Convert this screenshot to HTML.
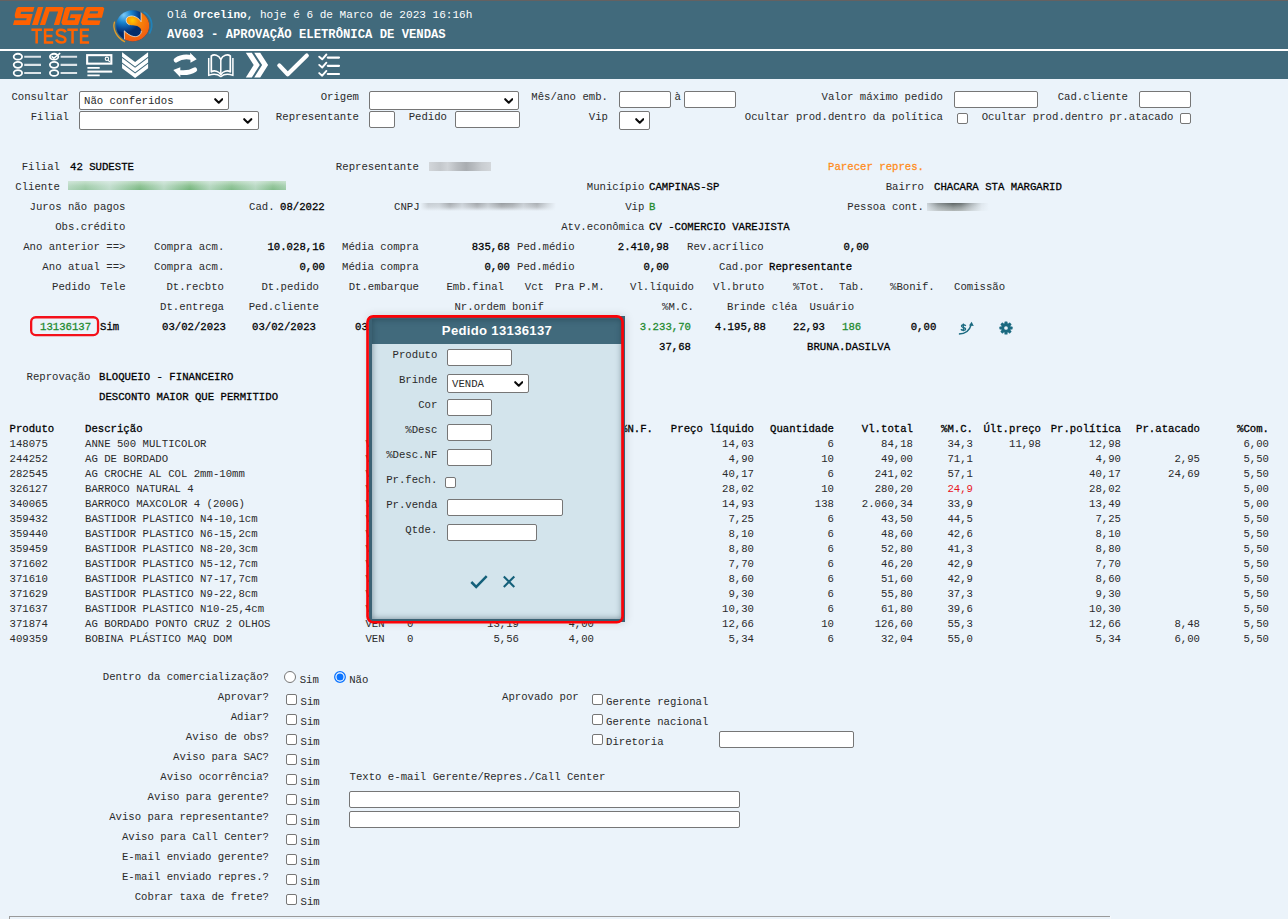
<!DOCTYPE html>
<html lang="pt-br"><head><meta charset="utf-8"><title>AV603 - APROVAÇÃO ELETRÔNICA DE VENDAS</title>
<style>
html,body{margin:0;padding:0}
body{width:1288px;height:919px;overflow:hidden;position:relative;background:#ebf3fa;font-family:"Liberation Mono",monospace;font-size:10.667px;color:#2a2a2a}
.t{position:absolute;white-space:pre;line-height:12px;height:12px}
.b{color:#000;-webkit-text-stroke:.27px currentColor}
.o{color:#ff8c1a}.gn{color:#1e8a2e}.rd{color:#e8141c}
.h{font-size:11.07px;color:#fff;line-height:13px;height:13px}
.h2{font-size:12.22px;font-weight:bold;color:#fff;line-height:14px;height:14px}
#topline{position:absolute;left:0;top:0;width:1288px;height:1px;background:#656161}
#hdr{position:absolute;left:0;top:1px;width:1288px;height:48px;background:#416a7c}
#sep{position:absolute;left:0;top:49px;width:1288px;height:2px;background:#fff}
#tb{position:absolute;left:0;top:51px;width:1288px;height:28px;background:#416a7c}
.inp{position:absolute;background:#fff;border:1px solid #767676;border-radius:2px}
.sel .st{position:absolute;left:4px;top:3px;line-height:12px;white-space:pre}
.sel .chev{position:absolute;right:5px;top:5.5px;width:9.5px;height:6.3px}
.cb{position:absolute;background:#fff;border:1px solid #767676;border-radius:2px}
.rad{position:absolute;width:10px;height:10px;border:1px solid #767676;border-radius:50%;background:#fff}
.rad.on{border-color:#0b6ff0;border-width:1.5px;width:9px;height:9px}
.rad.on i{position:absolute;left:1.75px;top:1.75px;width:5.5px;height:5.5px;border-radius:50%;background:#0b6ff0}
.bl{position:absolute}
.b1{background:linear-gradient(90deg,#d2d6da,#c4c8cc 18%,#d0d4d8 30%,#b9bdc1 45%,#a9adb1 60%,#b7bbbf 72%,#c9cdd1 85%,#d3d7db)}
.b2{background:linear-gradient(90deg,rgba(235,243,250,.5) 0%,rgba(235,243,250,.3) 8%,rgba(235,243,250,.62) 19%,rgba(235,243,250,.05) 33%,rgba(235,243,250,.55) 44%,rgba(235,243,250,0) 56%,rgba(235,243,250,.5) 65%,rgba(235,243,250,.1) 75%,rgba(235,243,250,.52) 86%,rgba(235,243,250,.12) 94%,rgba(235,243,250,.35) 100%),linear-gradient(180deg,#b9dabd,#88c08e 55%,#74b47b)}
.b3{background:linear-gradient(90deg,rgba(235,243,250,1) 0%,rgba(235,243,250,.55) 6%,rgba(235,243,250,.6) 14%,rgba(235,243,250,.15) 22%,rgba(235,243,250,.6) 31%,rgba(235,243,250,.1) 42%,rgba(235,243,250,.5) 50%,rgba(235,243,250,0) 60%,rgba(235,243,250,.15) 68%,rgba(235,243,250,.55) 76%,rgba(235,243,250,.2) 86%,rgba(235,243,250,.7) 94%,rgba(235,243,250,1) 100%),linear-gradient(180deg,#979b9f,#b2b6ba 50%,rgba(235,243,250,1) 100%)}
.b4{background:linear-gradient(90deg,rgba(235,243,250,.78) 0%,rgba(235,243,250,.3) 18%,rgba(235,243,250,0) 42%,rgba(235,243,250,.1) 55%,rgba(235,243,250,.55) 72%,rgba(235,243,250,.9) 88%,rgba(235,243,250,1) 100%),linear-gradient(180deg,#5c6363,#8d9494 50%,#b3b9b9)}
.redbox{position:absolute;border:2.3px solid #f4101a;border-radius:5.5px}
#dlg{position:absolute;left:369px;top:316px;width:250px;height:300px;border:3px solid #3b6274;background:#d3e4ec;box-shadow:0 0 9px rgba(0,0,0,.16)}
#dh{height:25px;background:#416a7c;color:#fff;font-family:"Liberation Sans",sans-serif;font-weight:bold;font-size:13.1px;letter-spacing:.32px;text-align:center;line-height:24px}
#dsh{position:absolute;left:0;top:0;right:0;bottom:0;box-shadow:inset 0 0 6px rgba(20,45,60,.5)}
#redd{position:absolute;left:366.2px;top:315px;width:252.2px;height:303px;border:2.7px solid #fb0207;border-radius:7px}
</style></head>
<body>
<div id="topline"></div><div id="hdr"></div><div id="sep"></div><div id="tb"></div>
<svg id="logo" width="165" height="50" viewBox="0 0 165 50" style="position:absolute;left:0;top:0"><path fill="#ff6100" fill-rule="evenodd" d="M18.07 6.91 L34.42 6.91 L33.09 11.67 L21.10 11.67 L20.58 13.89 L32.69 13.89 L29.78 24.99 L13.03 24.99 L14.24 20.35 L26.15 20.35 L26.75 18.13 L15.45 18.13 L14.76 16.11 L14.93 14.09 L16.46 8.44ZM37.86 6.91 L43.31 6.91 L37.86 24.99 L32.00 24.99ZM39.87 24.99 L45.93 6.91 L62.48 6.91 L63.77 7.96 L59.25 24.99 L53.80 24.99 L58.12 11.47 L49.48 11.47 L45.12 24.99ZM66.73 6.91 L84.01 6.91 L82.84 10.60 L70.03 10.60 L67.32 20.30 L74.69 20.30 L75.27 17.98 L69.84 17.98 L70.81 14.29 L81.68 14.29 L78.19 24.96 L62.66 24.96 L61.30 22.83 L65.18 8.27ZM86.92 6.91 L103.03 6.91 L104.27 8.46 L101.94 17.66 L88.09 17.98 L87.43 20.30 L100.51 20.50 L99.23 24.96 L82.26 24.96 L80.98 22.83 L85.64 8.46ZM90.22 11.18 L98.18 11.18 L97.60 13.51 L89.25 13.51Z"/><g fill="none" stroke="#ff6200" stroke-width="2.5"><path d="M31.4 29.8H41.9M36.65 28.7V43.6"/><path d="M53.2 29.8H45.1V42.4H53.2M45.1 36H52.4"/><path d="M65.6 32.2C64.8 30.2 63.2 29.7 61.1 29.7C58.3 29.7 56.9 31.2 56.9 33C56.9 37.3 65.4 35 65.4 39.4C65.4 41.5 63.6 42.5 61.2 42.5C58.6 42.5 57 41.6 56.1 39.6"/><path d="M67.3 29.8H77.8M72.55 28.7V43.6"/><path d="M89.1 29.8H81.1V42.4H89.1M81.1 36H88.3"/></g><defs><radialGradient id="gb" gradientUnits="userSpaceOnUse" cx="330" cy="230" r="520"><stop offset="0" stop-color="#7cc8f5"/><stop offset="0.3" stop-color="#1a86d0"/><stop offset="0.55" stop-color="#0a4c98"/><stop offset="0.72" stop-color="#052c6b"/></radialGradient><radialGradient id="go" gradientUnits="userSpaceOnUse" cx="510" cy="345" r="420"><stop offset="0" stop-color="#ffc800"/><stop offset="0.32" stop-color="#f98a06"/><stop offset="0.7" stop-color="#f4700c"/><stop offset="1" stop-color="#f25a12"/></radialGradient><clipPath id="gc"><ellipse cx="515" cy="455" rx="345" ry="326"/></clipPath></defs><g transform="translate(108 4) scale(0.04789)"><g clip-path="url(#gc)"><rect x="100" y="100" width="800" height="720" fill="url(#gb)"/><path id="sp" d="M690 100 L690 370 C640 290 560 245 480 250 C410 255 372 300 380 350 C388 412 440 440 520 446 C600 452 690 482 695 560 C698 640 620 692 540 680 C460 665 390 612 340 560 L345 820 L900 820 L900 100Z" fill="url(#go)"/><path d="M690 150 L690 370 C640 290 560 245 480 250 C410 255 372 300 380 350 C384 390 410 420 450 434 M695 560 C698 640 620 692 540 680 C460 665 390 612 340 560 L345 760" fill="none" stroke="#fff" stroke-width="15" stroke-linejoin="miter" opacity=".95"/></g><path d="M135 380 C90 520 180 700 345 785" fill="none" stroke="#f5a21e" stroke-width="28" stroke-linecap="round" opacity=".9"/><path d="M755 172 C900 250 960 440 870 605" fill="none" stroke="#1b86c4" stroke-width="36" stroke-linecap="round" opacity=".85"/></g></svg>
<span class="t h" style="left:167px;top:9px">Olá <b>Orcelino</b>, hoje é 6 de Marco de 2023 16:16h</span>
<span class="t h2" style="left:167px;top:28px">AV603 - APROVAÇÃO ELETRÔNICA DE VENDAS</span>
<svg id="tbi" width="360" height="28" viewBox="0 0 360 28" style="position:absolute;left:0;top:51px" fill="none" stroke="#fff">
<g stroke-width="1.8"><ellipse cx="17.9" cy="5.7" rx="4.2" ry="2.95"/><ellipse cx="17.9" cy="13.85" rx="4.2" ry="2.95"/><ellipse cx="17.9" cy="22.0" rx="4.2" ry="2.95"/></g>
<g stroke-width="2.1" stroke="#dde4e8"><path d="M24.2 5.8H41M24.2 13.9H41M24.2 22.05H41"/></g>
<g stroke-width="1.8"><ellipse cx="54.1" cy="5.7" rx="4.2" ry="2.95"/><ellipse cx="54.1" cy="13.85" rx="4.2" ry="2.95"/><ellipse cx="54.1" cy="22.0" rx="4.2" ry="2.95"/><path d="M51.6 5.3 L53.8 7.3 L60.2 2.2" stroke-width="1.6"/></g>
<g stroke-width="2.1" stroke="#dde4e8"><path d="M60.6 5.8H77.1M60.6 13.9H77.1M60.6 22.05H77.1"/></g>
<g><rect x="87.15" y="4.15" width="24.2" height="8.5" stroke-width="2.1"/><path d="M87.4 16.9H99.7M87.4 24.4H99.7" stroke-width="1.9"/><path d="M87.4 20.6H112.2" stroke-width="2.1"/><circle cx="106.9" cy="7.8" r="1.7" stroke-width="1.1"/><path d="M108.1 9.1 L109.8 10.9" stroke-width="1.2"/></g>
<g fill="#fff" stroke="none"><path d="M122.06 1.30 L135.1 11.10 L148.1 1.30 L148.1 5.80 L135.1 15.60 L122.06 5.80Z"/><path d="M122.06 7.00 L135.1 16.80 L148.1 7.00 L148.1 11.50 L135.1 21.30 L122.06 11.50Z"/><path d="M122.06 12.70 L135.1 22.50 L148.1 12.70 L148.1 17.20 L135.1 27.00 L122.06 17.20Z"/></g>
<g fill="#fff" stroke="none"><path d="M190.1 1.8 L196.7 8.3 L190.5 11.8Z"/><path d="M180.3 16.2 L173.3 19 L180.3 26.2Z"/></g>
<g stroke-width="4.7" stroke-linecap="round"><path d="M176 9.2 Q182 4.8 191 6.4"/><path d="M194.8 18.7 Q189 22.4 180 21.5"/></g>
<g stroke-width="1.7" stroke-linejoin="round"><path d="M220.8 8.3 C218.8 4.2 214.2 2.8 211.3 5 V20.8 C214.2 19 218.8 20.2 220.8 23.6 C222.8 20.2 227.4 19 230.3 20.8 V5 C227.4 2.8 222.8 4.2 220.8 8.3Z"/><path d="M220.8 8.3V23.6" stroke-width="1.5"/><path d="M208.7 6.9 V24.4 C213 22.8 218 23.4 220.8 25.6 C223.6 23.4 228.6 22.8 232.9 24.4 V6.9" stroke-width="1.5"/></g>
<g fill="#fff" stroke="none"><path d="M245.8 1.8 H251.8 L259.8 13.9 L251.8 26.5 H245.8 L253.7 13.9Z"/><path d="M254.2 1.8 H260.2 L268.1 13.9 L260.2 26.5 H254.2 L262.1 13.9Z"/></g>
<path d="M279.3 14.4 L287.7 23.2 L306.8 4.6" stroke-width="4.2" stroke-linecap="round" stroke-linejoin="round"/>
<g stroke-width="1.9" stroke-linecap="round" stroke-linejoin="round"><path d="M319.2 5.7 L322.2 8.3 L326.4 3.5M319.2 13.9 L322.2 16.5 L326.4 11.7M319.2 22.1 L322.2 24.7 L326.4 19.9"/></g>
<path d="M327.8 6.6H339M327.8 14.8H339M327.8 23H339" stroke-width="2.2" stroke-linecap="round"/>
</svg>
<span class="t " style="right:1219px;top:91px">Consultar</span>
<div class="inp sel" style="left:79px;top:91px;width:148px;height:16.6px"><span class="st">Não conferidos</span><svg class="chev" viewBox="0 0 12 8"><path d="M1.5 1.5 L6 6 L10.5 1.5" fill="none" stroke="#0a0a0a" stroke-width="2.6" stroke-linecap="round" stroke-linejoin="round"/></svg></div>
<span class="t " style="right:929px;top:91px">Origem</span>
<div class="inp sel" style="left:369px;top:91px;width:148px;height:16.6px"><span class="st"></span><svg class="chev" viewBox="0 0 12 8"><path d="M1.5 1.5 L6 6 L10.5 1.5" fill="none" stroke="#0a0a0a" stroke-width="2.6" stroke-linecap="round" stroke-linejoin="round"/></svg></div>
<span class="t " style="right:680px;top:91px">Mês/ano emb.</span>
<div class="inp " style="left:619px;top:91px;width:50px;height:15px"></div>
<span class="t " style="left:674.6px;top:91px">à</span>
<div class="inp " style="left:684px;top:91px;width:50px;height:15px"></div>
<span class="t " style="right:345px;top:91px">Valor máximo pedido</span>
<div class="inp " style="left:954px;top:91px;width:82px;height:15px"></div>
<span class="t " style="right:160px;top:91px">Cad.cliente</span>
<div class="inp " style="left:1139px;top:91px;width:50px;height:15px"></div>
<span class="t " style="right:1219px;top:111px">Filial</span>
<div class="inp sel" style="left:79px;top:111px;width:177.6px;height:16.6px"><span class="st"></span><svg class="chev" viewBox="0 0 12 8"><path d="M1.5 1.5 L6 6 L10.5 1.5" fill="none" stroke="#0a0a0a" stroke-width="2.6" stroke-linecap="round" stroke-linejoin="round"/></svg></div>
<span class="t " style="right:929px;top:111px">Representante</span>
<div class="inp " style="left:369px;top:111px;width:24px;height:15px"></div>
<span class="t " style="right:841px;top:111px">Pedido</span>
<div class="inp " style="left:455px;top:111px;width:63px;height:15px"></div>
<span class="t " style="right:680px;top:111px">Vip</span>
<div class="inp sel" style="left:619px;top:111px;width:29px;height:16.6px"><span class="st"></span><svg class="chev" viewBox="0 0 12 8"><path d="M1.5 1.5 L6 6 L10.5 1.5" fill="none" stroke="#0a0a0a" stroke-width="2.6" stroke-linecap="round" stroke-linejoin="round"/></svg></div>
<span class="t " style="right:345px;top:111px">Ocultar prod.dentro da política</span>
<div class="cb" style="left:957px;top:113px;width:9px;height:9px"></div>
<span class="t " style="right:114.5px;top:111px">Ocultar prod.dentro pr.atacado</span>
<div class="cb" style="left:1180px;top:113px;width:9px;height:9px"></div>
<span class="t " style="right:1228px;top:161px">Filial</span>
<span class="t b" style="left:70px;top:161px">42 SUDESTE</span>
<span class="t " style="right:869px;top:161px">Representante</span>
<div class="bl b1" style="left:429px;top:162px;width:62px;height:8.7px"></div>
<span class="t b o" style="right:364px;top:161px">Parecer repres.</span>
<span class="t " style="right:1228px;top:181px">Cliente</span>
<div class="bl b2" style="left:68px;top:181.1px;width:218px;height:8.7px"></div>
<span class="t " style="right:643.7px;top:181px">Município</span>
<span class="t b" style="left:649px;top:181px">CAMPINAS-SP</span>
<span class="t " style="right:364px;top:181px">Bairro</span>
<span class="t b" style="left:934px;top:181px">CHACARA STA MARGARID</span>
<span class="t " style="right:1162.5px;top:201px">Juros não pagos</span>
<span class="t " style="left:249px;top:201px">Cad.</span>
<span class="t b" style="left:280px;top:201px">08/2022</span>
<span class="t " style="left:394px;top:201px">CNPJ</span>
<div class="bl b3" style="left:420px;top:202.8px;width:136px;height:8px"></div>
<span class="t " style="right:643.7px;top:201px">Vip</span>
<span class="t b gn" style="left:649px;top:201px">B</span>
<span class="t " style="right:364px;top:201px">Pessoa cont.</span>
<div class="bl b4" style="left:927px;top:202.7px;width:62px;height:8.2px"></div>
<span class="t " style="right:1162.5px;top:221px">Obs.crédito</span>
<span class="t " style="right:643.7px;top:221px">Atv.econômica</span>
<span class="t b" style="left:649px;top:221px">CV -COMERCIO VAREJISTA</span>
<span class="t " style="right:1162.5px;top:241px">Ano anterior ==&gt;</span>
<span class="t " style="left:154px;top:241px">Compra acm.</span>
<span class="t b" style="right:963px;top:241px">10.028,16</span>
<span class="t " style="left:342px;top:241px">Média compra</span>
<span class="t b" style="right:778px;top:241px">835,68</span>
<span class="t " style="left:517px;top:241px">Ped.médio</span>
<span class="t b" style="right:619px;top:241px">2.410,98</span>
<span class="t " style="left:687px;top:241px">Rev.acrílico</span>
<span class="t b" style="right:419px;top:241px">0,00</span>
<span class="t " style="right:1162.5px;top:261px">Ano atual ==&gt;</span>
<span class="t " style="left:154px;top:261px">Compra acm.</span>
<span class="t b" style="right:963px;top:261px">0,00</span>
<span class="t " style="left:342px;top:261px">Média compra</span>
<span class="t b" style="right:778px;top:261px">0,00</span>
<span class="t " style="left:517px;top:261px">Ped.médio</span>
<span class="t b" style="right:619px;top:261px">0,00</span>
<span class="t " style="left:719px;top:261px">Cad.por</span>
<span class="t b" style="left:769px;top:261px">Representante</span>
<span class="t " style="left:52px;top:281px">Pedido</span>
<span class="t " style="left:100px;top:281px">Tele</span>
<span class="t " style="right:1064px;top:281px">Dt.recbto</span>
<span class="t " style="right:969px;top:281px">Dt.pedido</span>
<span class="t " style="right:869px;top:281px">Dt.embarque</span>
<span class="t " style="right:784px;top:281px">Emb.final</span>
<span class="t " style="right:744px;top:281px">Vct</span>
<span class="t " style="left:555px;top:281px">Pra</span>
<span class="t " style="left:579px;top:281px">P.M.</span>
<span class="t " style="right:594px;top:281px">Vl.líquido</span>
<span class="t " style="right:523.8px;top:281px">Vl.bruto</span>
<span class="t " style="right:463px;top:281px">%Tot.</span>
<span class="t " style="left:839px;top:281px">Tab.</span>
<span class="t " style="left:890px;top:281px">%Bonif.</span>
<span class="t " style="left:954px;top:281px">Comissão</span>
<span class="t " style="right:1064px;top:301px">Dt.entrega</span>
<span class="t " style="right:969px;top:301px">Ped.cliente</span>
<span class="t " style="right:744px;top:301px">Nr.ordem bonif</span>
<span class="t " style="right:594px;top:301px">%M.C.</span>
<span class="t " style="left:727px;top:301px">Brinde cléa</span>
<span class="t " style="left:809.4px;top:301px">Usuário</span>
<svg style="position:absolute;left:25px;top:312px" width="80" height="30" viewBox="25 312 80 30"><rect x="31.15" y="317.25" width="66.9" height="17.8" rx="4.6" fill="none" stroke="#f4101a" stroke-width="2.3"/></svg>
<span class="t b gn" style="left:40px;top:321px">13136137</span>
<span class="t b" style="left:100px;top:321px">Sim</span>
<span class="t b" style="left:162px;top:321px">03/02/2023</span>
<span class="t b" style="left:252px;top:321px">03/02/2023</span>
<span class="t b" style="left:355px;top:321px">03/02/2023</span>
<span class="t b gn" style="right:597px;top:321px">3.233,70</span>
<span class="t b" style="right:522px;top:321px">4.195,88</span>
<span class="t b" style="right:463px;top:321px">22,93</span>
<span class="t b gn" style="left:842px;top:321px">186</span>
<span class="t b" style="right:351.70000000000005px;top:321px">0,00</span>
<span class="t b" style="right:597px;top:341px">37,68</span>
<span class="t b" style="left:807px;top:341px">BRUNA.DASILVA</span>
<svg style="position:absolute;left:956px;top:320px" width="20" height="17" viewBox="0 0 20 17">
<path d="M2.9 14.1 C9 14, 13.6 10.6, 15.3 4.4" fill="none" stroke="#1b6a80" stroke-width="1.55" stroke-linecap="butt"/>
<path d="M13.0 5.6 L15.6 1.7 L17.8 6.0Z" fill="#1b6a80"/>
<path d="M9.7 6 C9.0 4.6 6.0 4.3 5.5 6.0 C5.1 7.7 9.6 7.2 9.6 9.0 C9.5 10.7 6.0 10.7 4.9 9.2" fill="none" stroke="#1b6a80" stroke-width="1.45"/><path d="M7.4 3.5V11.3" stroke="#1b6a80" stroke-width="1.1"/></svg>
<svg style="position:absolute;left:998.04px;top:320.4px" width="16" height="16" viewBox="0 0 16 16"><g fill="#1b6a80"><circle cx="8" cy="8" r="4.7"/>
<rect x="6.45" y="1.4" width="3.1" height="13.2" rx="0.7"/><rect x="6.45" y="1.4" width="3.1" height="13.2" rx="0.7" transform="rotate(45 8 8)"/><rect x="6.45" y="1.4" width="3.1" height="13.2" rx="0.7" transform="rotate(90 8 8)"/><rect x="6.45" y="1.4" width="3.1" height="13.2" rx="0.7" transform="rotate(135 8 8)"/></g><circle cx="8" cy="8" r="1.85" fill="#ebf3fa"/></svg>
<span class="t " style="left:26.5px;top:371px">Reprovação</span>
<span class="t b" style="left:99px;top:371px">BLOQUEIO - FINANCEIRO</span>
<span class="t b" style="left:99px;top:391px">DESCONTO MAIOR QUE PERMITIDO</span>
<span class="t b" style="left:9.5px;top:423px">Produto</span>
<span class="t b" style="left:85px;top:423px">Descrição</span>
<span class="t b" style="right:635px;top:423px">%N.F.</span>
<span class="t b" style="right:534px;top:423px">Preço líquido</span>
<span class="t b" style="right:454px;top:423px">Quantidade</span>
<span class="t b" style="right:375px;top:423px">Vl.total</span>
<span class="t b" style="right:315px;top:423px">%M.C.</span>
<span class="t b" style="right:247px;top:423px">Últ.preço</span>
<span class="t b" style="right:167px;top:423px">Pr.política</span>
<span class="t b" style="right:88px;top:423px">Pr.atacado</span>
<span class="t b" style="right:19px;top:423px">%Com.</span>
<span class="t " style="left:9.5px;top:438px">148075</span>
<span class="t " style="left:85px;top:438px">ANNE 500 MULTICOLOR</span>
<span class="t " style="left:365.4px;top:438px">VEN</span>
<span class="t " style="left:407px;top:438px">0</span>
<span class="t " style="right:534px;top:438px">14,03</span>
<span class="t " style="right:454px;top:438px">6</span>
<span class="t " style="right:375px;top:438px">84,18</span>
<span class="t " style="right:315px;top:438px">34,3</span>
<span class="t " style="right:247px;top:438px">11,98</span>
<span class="t " style="right:167px;top:438px">12,98</span>
<span class="t " style="right:19px;top:438px">6,00</span>
<span class="t " style="left:9.5px;top:453px">244252</span>
<span class="t " style="left:85px;top:453px">AG DE BORDADO</span>
<span class="t " style="left:365.4px;top:453px">VEN</span>
<span class="t " style="left:407px;top:453px">0</span>
<span class="t " style="right:534px;top:453px">4,90</span>
<span class="t " style="right:454px;top:453px">10</span>
<span class="t " style="right:375px;top:453px">49,00</span>
<span class="t " style="right:315px;top:453px">71,1</span>
<span class="t " style="right:167px;top:453px">4,90</span>
<span class="t " style="right:88px;top:453px">2,95</span>
<span class="t " style="right:19px;top:453px">5,50</span>
<span class="t " style="left:9.5px;top:468px">282545</span>
<span class="t " style="left:85px;top:468px">AG CROCHE AL COL 2mm-10mm</span>
<span class="t " style="left:365.4px;top:468px">VEN</span>
<span class="t " style="left:407px;top:468px">0</span>
<span class="t " style="right:534px;top:468px">40,17</span>
<span class="t " style="right:454px;top:468px">6</span>
<span class="t " style="right:375px;top:468px">241,02</span>
<span class="t " style="right:315px;top:468px">57,1</span>
<span class="t " style="right:167px;top:468px">40,17</span>
<span class="t " style="right:88px;top:468px">24,69</span>
<span class="t " style="right:19px;top:468px">5,50</span>
<span class="t " style="left:9.5px;top:483px">326127</span>
<span class="t " style="left:85px;top:483px">BARROCO NATURAL 4</span>
<span class="t " style="left:365.4px;top:483px">VEN</span>
<span class="t " style="left:407px;top:483px">0</span>
<span class="t " style="right:534px;top:483px">28,02</span>
<span class="t " style="right:454px;top:483px">10</span>
<span class="t " style="right:375px;top:483px">280,20</span>
<span class="t rd" style="right:315px;top:483px">24,9</span>
<span class="t " style="right:167px;top:483px">28,02</span>
<span class="t " style="right:19px;top:483px">5,00</span>
<span class="t " style="left:9.5px;top:498px">340065</span>
<span class="t " style="left:85px;top:498px">BARROCO MAXCOLOR 4 (200G)</span>
<span class="t " style="left:365.4px;top:498px">VEN</span>
<span class="t " style="left:407px;top:498px">0</span>
<span class="t " style="right:534px;top:498px">14,93</span>
<span class="t " style="right:454px;top:498px">138</span>
<span class="t " style="right:375px;top:498px">2.060,34</span>
<span class="t " style="right:315px;top:498px">33,9</span>
<span class="t " style="right:167px;top:498px">13,49</span>
<span class="t " style="right:19px;top:498px">5,00</span>
<span class="t " style="left:9.5px;top:513px">359432</span>
<span class="t " style="left:85px;top:513px">BASTIDOR PLASTICO N4-10,1cm</span>
<span class="t " style="left:365.4px;top:513px">VEN</span>
<span class="t " style="left:407px;top:513px">0</span>
<span class="t " style="right:534px;top:513px">7,25</span>
<span class="t " style="right:454px;top:513px">6</span>
<span class="t " style="right:375px;top:513px">43,50</span>
<span class="t " style="right:315px;top:513px">44,5</span>
<span class="t " style="right:167px;top:513px">7,25</span>
<span class="t " style="right:19px;top:513px">5,50</span>
<span class="t " style="left:9.5px;top:528px">359440</span>
<span class="t " style="left:85px;top:528px">BASTIDOR PLASTICO N6-15,2cm</span>
<span class="t " style="left:365.4px;top:528px">VEN</span>
<span class="t " style="left:407px;top:528px">0</span>
<span class="t " style="right:534px;top:528px">8,10</span>
<span class="t " style="right:454px;top:528px">6</span>
<span class="t " style="right:375px;top:528px">48,60</span>
<span class="t " style="right:315px;top:528px">42,6</span>
<span class="t " style="right:167px;top:528px">8,10</span>
<span class="t " style="right:19px;top:528px">5,50</span>
<span class="t " style="left:9.5px;top:543px">359459</span>
<span class="t " style="left:85px;top:543px">BASTIDOR PLASTICO N8-20,3cm</span>
<span class="t " style="left:365.4px;top:543px">VEN</span>
<span class="t " style="left:407px;top:543px">0</span>
<span class="t " style="right:534px;top:543px">8,80</span>
<span class="t " style="right:454px;top:543px">6</span>
<span class="t " style="right:375px;top:543px">52,80</span>
<span class="t " style="right:315px;top:543px">41,3</span>
<span class="t " style="right:167px;top:543px">8,80</span>
<span class="t " style="right:19px;top:543px">5,50</span>
<span class="t " style="left:9.5px;top:558px">371602</span>
<span class="t " style="left:85px;top:558px">BASTIDOR PLASTICO N5-12,7cm</span>
<span class="t " style="left:365.4px;top:558px">VEN</span>
<span class="t " style="left:407px;top:558px">0</span>
<span class="t " style="right:534px;top:558px">7,70</span>
<span class="t " style="right:454px;top:558px">6</span>
<span class="t " style="right:375px;top:558px">46,20</span>
<span class="t " style="right:315px;top:558px">42,9</span>
<span class="t " style="right:167px;top:558px">7,70</span>
<span class="t " style="right:19px;top:558px">5,50</span>
<span class="t " style="left:9.5px;top:573px">371610</span>
<span class="t " style="left:85px;top:573px">BASTIDOR PLASTICO N7-17,7cm</span>
<span class="t " style="left:365.4px;top:573px">VEN</span>
<span class="t " style="left:407px;top:573px">0</span>
<span class="t " style="right:534px;top:573px">8,60</span>
<span class="t " style="right:454px;top:573px">6</span>
<span class="t " style="right:375px;top:573px">51,60</span>
<span class="t " style="right:315px;top:573px">42,9</span>
<span class="t " style="right:167px;top:573px">8,60</span>
<span class="t " style="right:19px;top:573px">5,50</span>
<span class="t " style="left:9.5px;top:588px">371629</span>
<span class="t " style="left:85px;top:588px">BASTIDOR PLASTICO N9-22,8cm</span>
<span class="t " style="left:365.4px;top:588px">VEN</span>
<span class="t " style="left:407px;top:588px">0</span>
<span class="t " style="right:534px;top:588px">9,30</span>
<span class="t " style="right:454px;top:588px">6</span>
<span class="t " style="right:375px;top:588px">55,80</span>
<span class="t " style="right:315px;top:588px">37,3</span>
<span class="t " style="right:167px;top:588px">9,30</span>
<span class="t " style="right:19px;top:588px">5,50</span>
<span class="t " style="left:9.5px;top:603px">371637</span>
<span class="t " style="left:85px;top:603px">BASTIDOR PLASTICO N10-25,4cm</span>
<span class="t " style="left:365.4px;top:603px">VEN</span>
<span class="t " style="left:407px;top:603px">0</span>
<span class="t " style="right:534px;top:603px">10,30</span>
<span class="t " style="right:454px;top:603px">6</span>
<span class="t " style="right:375px;top:603px">61,80</span>
<span class="t " style="right:315px;top:603px">39,6</span>
<span class="t " style="right:167px;top:603px">10,30</span>
<span class="t " style="right:19px;top:603px">5,50</span>
<span class="t " style="left:9.5px;top:618px">371874</span>
<span class="t " style="left:85px;top:618px">AG BORDADO PONTO CRUZ 2 OLHOS</span>
<span class="t " style="left:365.4px;top:618px">VEN</span>
<span class="t " style="left:407px;top:618px">0</span>
<span class="t " style="right:534px;top:618px">12,66</span>
<span class="t " style="right:454px;top:618px">10</span>
<span class="t " style="right:375px;top:618px">126,60</span>
<span class="t " style="right:315px;top:618px">55,3</span>
<span class="t " style="right:167px;top:618px">12,66</span>
<span class="t " style="right:88px;top:618px">8,48</span>
<span class="t " style="right:19px;top:618px">5,50</span>
<span class="t " style="left:9.5px;top:633px">409359</span>
<span class="t " style="left:85px;top:633px">BOBINA PLÁSTICO MAQ DOM</span>
<span class="t " style="left:365.4px;top:633px">VEN</span>
<span class="t " style="left:407px;top:633px">0</span>
<span class="t " style="right:534px;top:633px">5,34</span>
<span class="t " style="right:454px;top:633px">6</span>
<span class="t " style="right:375px;top:633px">32,04</span>
<span class="t " style="right:315px;top:633px">55,0</span>
<span class="t " style="right:167px;top:633px">5,34</span>
<span class="t " style="right:88px;top:633px">6,00</span>
<span class="t " style="right:19px;top:633px">5,50</span>
<span class="t " style="right:769px;top:618px">13,19</span>
<span class="t " style="right:694px;top:618px">4,00</span>
<span class="t " style="right:769px;top:633px">5,56</span>
<span class="t " style="right:694px;top:633px">4,00</span>
<span class="t " style="right:1019px;top:671px">Dentro da comercialização?</span>
<div class="rad" style="left:284px;top:671px"></div>
<span class="t " style="left:299.7px;top:674px">Sim</span>
<svg style="position:absolute;left:334px;top:671px" width="12" height="12" viewBox="0 0 12 12"><circle cx="6" cy="6" r="5.3" fill="#fff" stroke="#0b74ff" stroke-width="1.3"/><circle cx="6" cy="6" r="3.5" fill="#0b74ff"/></svg>
<span class="t " style="left:349.2px;top:674px">Não</span>
<span class="t " style="right:1019px;top:691px">Aprovar?</span>
<div class="cb" style="left:286px;top:694px;width:9px;height:9px"></div>
<span class="t " style="left:300.5px;top:696px">Sim</span>
<span class="t " style="right:1019px;top:711px">Adiar?</span>
<div class="cb" style="left:286px;top:714px;width:9px;height:9px"></div>
<span class="t " style="left:300.5px;top:716px">Sim</span>
<span class="t " style="right:1019px;top:731px">Aviso de obs?</span>
<div class="cb" style="left:286px;top:734px;width:9px;height:9px"></div>
<span class="t " style="left:300.5px;top:736px">Sim</span>
<span class="t " style="right:1019px;top:751px">Aviso para SAC?</span>
<div class="cb" style="left:286px;top:754px;width:9px;height:9px"></div>
<span class="t " style="left:300.5px;top:756px">Sim</span>
<span class="t " style="right:1019px;top:771px">Aviso ocorrência?</span>
<div class="cb" style="left:286px;top:774px;width:9px;height:9px"></div>
<span class="t " style="left:300.5px;top:776px">Sim</span>
<span class="t " style="right:1019px;top:791px">Aviso para gerente?</span>
<div class="cb" style="left:286px;top:794px;width:9px;height:9px"></div>
<span class="t " style="left:300.5px;top:796px">Sim</span>
<span class="t " style="right:1019px;top:811px">Aviso para representante?</span>
<div class="cb" style="left:286px;top:814px;width:9px;height:9px"></div>
<span class="t " style="left:300.5px;top:816px">Sim</span>
<span class="t " style="right:1019px;top:831px">Aviso para Call Center?</span>
<div class="cb" style="left:286px;top:834px;width:9px;height:9px"></div>
<span class="t " style="left:300.5px;top:836px">Sim</span>
<span class="t " style="right:1019px;top:851px">E-mail enviado gerente?</span>
<div class="cb" style="left:286px;top:854px;width:9px;height:9px"></div>
<span class="t " style="left:300.5px;top:856px">Sim</span>
<span class="t " style="right:1019px;top:871px">E-mail enviado repres.?</span>
<div class="cb" style="left:286px;top:874px;width:9px;height:9px"></div>
<span class="t " style="left:300.5px;top:876px">Sim</span>
<span class="t " style="right:1019px;top:891px">Cobrar taxa de frete?</span>
<div class="cb" style="left:286px;top:894px;width:9px;height:9px"></div>
<span class="t " style="left:300.5px;top:896px">Sim</span>
<span class="t " style="left:502px;top:691px">Aprovado por</span>
<div class="cb" style="left:592px;top:694px;width:9px;height:9px"></div>
<span class="t " style="left:606px;top:696px">Gerente regional</span>
<div class="cb" style="left:592px;top:714px;width:9px;height:9px"></div>
<span class="t " style="left:606px;top:716px">Gerente nacional</span>
<div class="cb" style="left:592px;top:734px;width:9px;height:9px"></div>
<span class="t " style="left:606px;top:736px">Diretoria</span>
<div class="inp " style="left:719px;top:731px;width:133px;height:15px"></div>
<span class="t " style="left:349.5px;top:771px">Texto e-mail Gerente/Repres./Call Center</span>
<div class="inp " style="left:349px;top:791px;width:389px;height:15px"></div>
<div class="inp " style="left:349px;top:811px;width:389px;height:15px"></div>
<div style="position:absolute;left:9px;top:916px;width:1101px;height:1px;background:#9a9a9a"></div><div style="position:absolute;left:9px;top:917px;width:1px;height:2px;background:#9a9a9a"></div><div style="position:absolute;left:1110px;top:916px;width:1px;height:3px;background:#f4f8fc"></div>
<div id="dlg"><div id="dh">Pedido 13136137</div><div id="dsh"></div></div>
<span class="t " style="right:850.7px;top:348.9px">Produto</span>
<span class="t " style="right:850.7px;top:373.9px">Brinde</span>
<span class="t " style="right:850.7px;top:398.9px">Cor</span>
<span class="t " style="right:850.7px;top:423.9px">%Desc</span>
<span class="t " style="right:850.7px;top:448.9px">%Desc.NF</span>
<span class="t " style="right:850.7px;top:473.9px">Pr.fech.</span>
<span class="t " style="right:850.7px;top:498.9px">Pr.venda</span>
<span class="t " style="right:850.7px;top:523.9px">Qtde.</span>
<div class="inp " style="left:447px;top:349px;width:63px;height:15px"></div>
<div class="inp sel" style="left:447px;top:374px;width:80px;height:17px"><span class="st">VENDA</span><svg class="chev" viewBox="0 0 12 8"><path d="M1.5 1.5 L6 6 L10.5 1.5" fill="none" stroke="#0a0a0a" stroke-width="2.6" stroke-linecap="round" stroke-linejoin="round"/></svg></div>
<div class="inp " style="left:447px;top:399px;width:43px;height:15px"></div>
<div class="inp " style="left:447px;top:424px;width:43px;height:15px"></div>
<div class="inp " style="left:447px;top:449px;width:43px;height:15px"></div>
<div class="cb" style="left:445px;top:477px;width:9px;height:9px"></div>
<div class="inp " style="left:447px;top:499px;width:114px;height:15px"></div>
<div class="inp " style="left:447px;top:524px;width:88px;height:15px"></div>
<svg style="position:absolute;left:468px;top:572px" width="50" height="20" viewBox="0 0 50 20" fill="none" stroke="#14607a">
<path d="M3.3 10 L8.2 14.9 L18.7 4.2" stroke-width="2.5"/><path d="M35.8 4.6 L46.3 14.9 M46.3 4.6 L35.8 14.9" stroke-width="2.1"/></svg>
<svg style="position:absolute;left:360px;top:310px" width="270" height="320" viewBox="360 310 270 320"><rect x="367.55" y="316.35" width="255" height="305.9" rx="5.7" fill="none" stroke="#fb0207" stroke-width="2.7"/></svg>
</body></html>
